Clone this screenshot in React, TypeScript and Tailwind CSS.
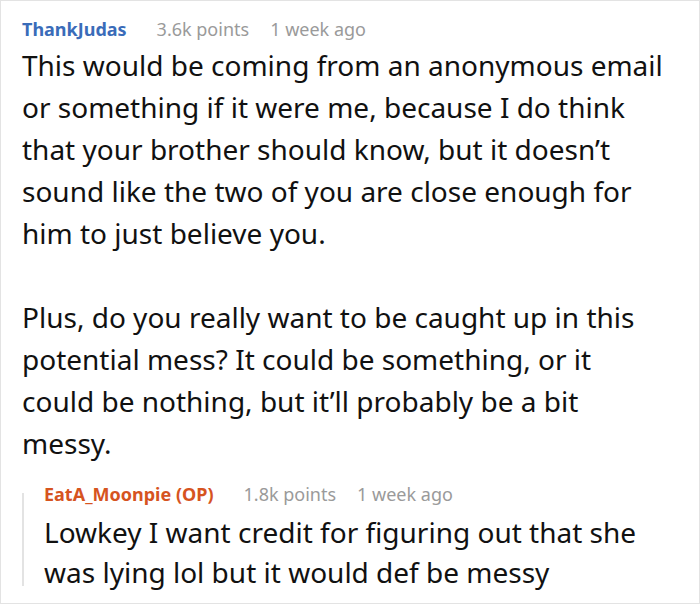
import React from 'react';

const FONT = "font-['Noto_Sans','Open_Sans',sans-serif]";

function Meta({ name, color, points }: { name: string; color: string; points: string }) {
    return (
        <div className="flex items-center text-[18px] leading-[24px]">
            <span className={`font-bold ${color}`}>{name}</span>
            <span className="ml-[30px] text-[#9a9a9a]">{points}</span>
            <span className="ml-[21px] text-[#9a9a9a]">1 week ago</span>
        </div>
    );
}

export default function App() {
    return (
        <div className={`${FONT} w-[700px] h-[604px] bg-white border border-[#e3e3e3] pl-[21px] pt-[16px] text-[#111]`}>
            <Meta name="ThankJudas" color="text-[#3a6cb9]" points="3.6k points" />
            <div className="mt-[3px] w-[642px] text-[28px] leading-[42px]">
                <p>
                    This would be coming from an anonymous email or something if it were me, because I do think
                    that your brother should know, but it doesn’t sound like the two of you are close enough for
                    him to just believe you.
                </p>
                <p className="mt-[42px]">
                    Plus, do you really want to be caught up in this potential mess? It could be something, or it
                    could be nothing, but it’ll probably be a bit messy.
                </p>
            </div>
            <div className="mt-[18px] flex">
                <div className="w-[2px] bg-[#e3e3e3] mt-[11px] mb-[6px]" />
                <div className="pl-[20px]">
                    <Meta name="EatA_Moonpie (OP)" color="text-[#d6541f]" points="1.8k points" />
                    <div className="mt-[6px] text-[28px] leading-[40px] w-[620px]">
                        Lowkey I want credit for figuring out that she was lying lol but it would def be messy
                    </div>
                </div>
            </div>
        </div>
    );
}
